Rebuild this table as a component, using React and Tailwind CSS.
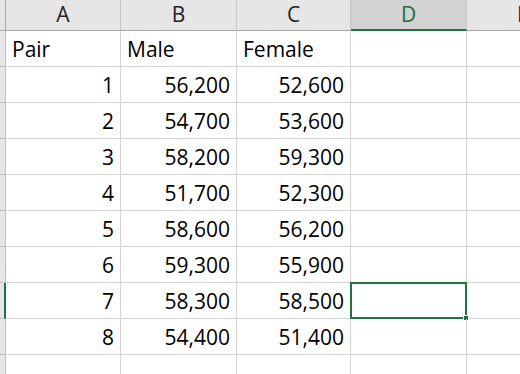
import React from 'react'

const rows = [
  ['Pair', 'Male', 'Female'],
  [1, '56,200', '52,600'],
  [2, '54,700', '53,600'],
  [3, '58,200', '59,300'],
  [4, '51,700', '52,300'],
  [5, '58,600', '56,200'],
  [6, '59,300', '55,900'],
  [7, '58,300', '58,500'],
  [8, '54,400', '51,400'],
  ['', '', ''],
]

const cell = 'h-[36px] border-r border-b border-[#d4d4d4] flex items-end pb-[6px] px-[6px] text-[21px] leading-none text-black'

const App = () => {
  return (
    <div className="w-[520px] h-[374px] overflow-hidden bg-white" style={{ fontFamily: '"Open Sans", sans-serif' }}>
      <div className="grid w-[583px] grid-cols-[6px_115px_116px_114px_116px_116px]">
        {/* header row */}
        <div className="h-[31px] bg-[#e6e6e6] border-r border-b border-[#a8a8a8]" />
        {['A', 'B', 'C'].map((c) => (
          <div key={c} className="h-[31px] bg-[#e6e6e6] border-r border-[#c6c6c6] border-b-[1px] border-b-[#a8a8a8] flex items-center justify-center text-[21px] text-[#222]">
            {c}
          </div>
        ))}
        <div className="h-[31px] bg-[#d2d2d2] border-r border-[#c6c6c6] border-b-2 border-b-[#217346] flex items-center justify-center text-[21px] text-[#1e6b41]">
          D
        </div>
        <div className="h-[31px] bg-[#e6e6e6] border-b border-[#a8a8a8] flex items-center justify-start pl-[50px] text-[21px] text-[#222]">
          E
        </div>

        {rows.map((r, i) => (
          <React.Fragment key={i}>
            <div className={`h-[36px] bg-[#e6e6e6] border-r border-b border-[#bdbdbd] ${i === 7 ? 'border-r-2 border-r-[#217346]' : ''}`} />
            <div className={`${cell} ${i === 0 ? 'justify-start' : 'justify-end'}`}>{r[0]}</div>
            <div className={`${cell} ${i === 0 ? 'justify-start' : 'justify-end'}`}>{r[1]}</div>
            <div className={`${cell} ${i === 0 ? 'justify-start' : 'justify-end'}`}>{r[2]}</div>
            <div className={`${cell} relative`}>
              {i === 7 && (
                <div className="absolute -left-[1px] -top-[1px] w-[117px] h-[37px] border-2 border-[#217346]">
                  <div className="absolute -right-[4px] -bottom-[4px] w-[6px] h-[6px] bg-[#217346] border border-white" />
                </div>
              )}
            </div>
            <div className={`${cell}`} />
          </React.Fragment>
        ))}
      </div>
    </div>
  )
}

export default App
